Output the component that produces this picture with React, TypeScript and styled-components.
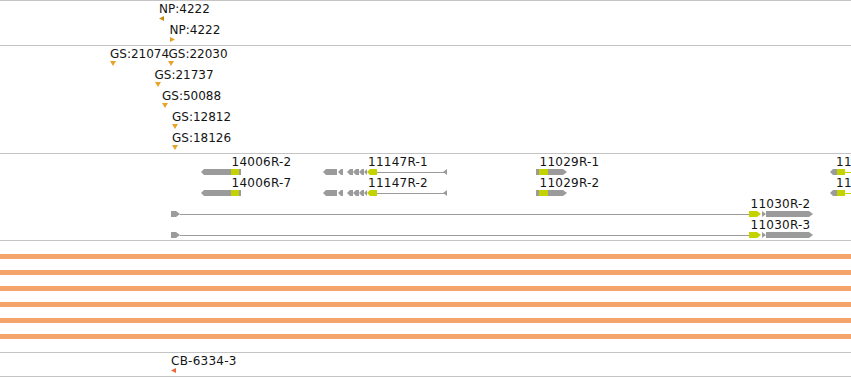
import React from "react";
import styled, { createGlobalStyle } from "styled-components";

const GlobalStyle = createGlobalStyle`
  html, body { margin: 0; padding: 0; background: #ffffff; }
  body { overflow: hidden; font-family: "DejaVu Sans", Verdana, sans-serif; }
`;

const GRAY = "#9b9b9b";
const LIME = "#c4d200";
const LINE = "#c4c4c4";
const GOLD = "#e8a328";

const Browser = styled.div`
  width: 851px;
  height: 377px;
  overflow: hidden;
  display: flex;
  flex-direction: column;
  border-top: 1px solid ${LINE};
  box-sizing: border-box;
  background: #fff;
`;

const Track = styled.section<{ $h: number }>`
  flex: none;
  height: ${(p) => p.$h}px;
  box-sizing: border-box;
  border-bottom: 1px solid ${LINE};
  padding-top: 1px;
  display: flex;
  flex-direction: column;
`;

const BarTrack = styled(Track)`
  padding: 13px 0 0;
  gap: 11px;
`;

const CoverageBar = styled.div`
  height: 5px;
  width: 100%;
  background: #f4a46a;
`;

/* one row of a feature track: a horizontal genomic canvas */
const Row = styled.div`
  position: relative;
  height: 21px;
  flex: none;
`;

/* a feature sits on the canvas at its genomic x */
const Feature = styled.div<{ $x: number }>`
  position: absolute;
  top: 0;
  left: ${(p) => p.$x}px;
  display: flex;
  flex-direction: column;
  align-items: flex-start;
`;

const Label = styled.span<{ $dx: number; $spaced?: boolean }>`
  display: block;
  margin-left: ${(p) => p.$dx}px;
  font-size: 12px;
  line-height: 14px;
  height: 14px;
  letter-spacing: ${(p) => (p.$spaced ? "0.25px" : "0")};
  color: #141414;
  white-space: nowrap;
`;

const Glyph = styled.svg<{ $dx: number }>`
  display: block;
  flex: none;
  margin-left: ${(p) => p.$dx}px;
  overflow: visible;
`;

type Dir = "left" | "right" | "down";

const triShapes: Record<Dir, { w: number; h: number; pts: string }> = {
  left: { w: 5, h: 5, pts: "0,2.5 5,0 5,5" },
  right: { w: 5, h: 5, pts: "0,0 5,2.5 0,5" },
  down: { w: 6, h: 5, pts: "0,0 6,0 3,5" },
};

type TagProps = { label: string; x: number; tx: number; dir: Dir; color: string; spaced?: boolean };

const Tag: React.FC<TagProps> = ({ label, x, tx, dir, color, spaced }) => {
  const left = Math.min(x, tx);
  const t = triShapes[dir];
  return (
    <Feature $x={left}>
      <Label $dx={x - left} $spaced={spaced}>
        {label}
      </Label>
      <Glyph $dx={tx - left} width={t.w} height={t.h} viewBox={`0 0 ${t.w} ${t.h}`}>
        <polygon points={t.pts} fill={color} />
      </Glyph>
    </Feature>
  );
};

type Shape = { pts?: string; rect?: [number, number, number, number]; c: string };

const leftArrow = (a: number, b: number, c = GRAY): Shape => ({
  pts: `${a},3 ${a + 3},0 ${b},0 ${b},6 ${a + 3},6`,
  c,
});
const rightArrow = (a: number, b: number, c = GRAY): Shape => ({
  pts: `${a},0 ${b - 4},0 ${b},3 ${b - 4},6 ${a},6`,
  c,
});
const box = (a: number, b: number, c = GRAY): Shape => ({ rect: [a, 0, b - a, 6], c });
const line = (a: number, b: number, c = GRAY): Shape => ({ rect: [a, 3, b - a, 1], c });
const leftTip = (a: number, b: number, c = GRAY): Shape => ({ pts: `${a},3 ${b},0 ${b},6`, c });

const Gene: React.FC<{ label?: string; x: number; shapes: Shape[] }> = ({ label, x, shapes }) => {
  const xs: number[] = [];
  shapes.forEach((s) => {
    if (s.rect) xs.push(s.rect[0], s.rect[0] + s.rect[2]);
    if (s.pts) s.pts.split(" ").forEach((p) => xs.push(parseFloat(p.split(",")[0])));
  });
  const min = Math.min(...xs);
  const max = Math.max(...xs);
  return (
    <Feature $x={min}>
      <Label $dx={x - min} $spaced>
        {label}
      </Label>
      <Glyph $dx={0} width={max - min} height={6} viewBox={`${min} 0 ${max - min} 6`}>
        {shapes.map((s, i) =>
          s.rect ? (
            <rect key={i} x={s.rect[0]} y={s.rect[1]} width={s.rect[2]} height={s.rect[3]} fill={s.c} />
          ) : (
            <polygon key={i} points={s.pts} fill={s.c} />
          )
        )}
      </Glyph>
    </Feature>
  );
};

const G14006: Shape[] = [leftArrow(201, 231), box(231, 239, LIME), box(239, 241)];
const G11147: Shape[] = [
  line(377, 447),
  leftTip(443, 447),
  leftArrow(323, 337),
  leftArrow(338, 343),
  leftArrow(347, 353),
  leftArrow(353, 359),
  leftArrow(359, 364),
  leftArrow(364, 367),
  leftArrow(367, 377, LIME),
];
const G11029: Shape[] = [box(536, 539), box(539, 548, LIME), rightArrow(548, 567)];
const GEdge: Shape[] = [leftArrow(830, 837), box(837, 845, LIME), line(845, 851, LIME)];
const G11030: Shape[] = [
  rightArrow(171, 180),
  line(180, 749),
  rightArrow(749, 761, LIME),
  rightArrow(762, 766),
  rightArrow(766, 813),
];

const geneRows: { label: string; x: number; shapes: Shape[] }[][] = [
  [
    { label: "14006R-2", x: 231.5, shapes: G14006 },
    { label: "11147R-1", x: 368, shapes: G11147 },
    { label: "11029R-1", x: 539.5, shapes: G11029 },
    { label: "11", x: 836, shapes: GEdge },
  ],
  [
    { label: "14006R-7", x: 231.5, shapes: G14006 },
    { label: "11147R-2", x: 368, shapes: G11147 },
    { label: "11029R-2", x: 539.5, shapes: G11029 },
    { label: "11", x: 836, shapes: GEdge },
  ],
  [{ label: "11030R-2", x: 750.5, shapes: G11030 }],
  [{ label: "11030R-3", x: 750.5, shapes: G11030 }],
];

const gsRows: { label: string; x: number; tx: number }[][] = [
  [
    { label: "GS:21074", x: 110, tx: 110 },
    { label: "GS:22030", x: 168.5, tx: 168 },
  ],
  [{ label: "GS:21737", x: 154.5, tx: 155 }],
  [{ label: "GS:50088", x: 162, tx: 162 }],
  [{ label: "GS:12812", x: 172, tx: 172 }],
  [{ label: "GS:18126", x: 172, tx: 172 }],
];

export default function App() {
  return (
    <>
      <GlobalStyle />
      <Browser>
        <Track $h={45}>
          <Row>
            <Tag label="NP:4222" x={159} tx={159} dir="left" color="#c78a0c" />
          </Row>
          <Row>
            <Tag label="NP:4222" x={169.5} tx={170} dir="right" color="#e2a020" />
          </Row>
        </Track>

        <Track $h={108}>
          {gsRows.map((row, i) => (
            <Row key={i}>
              {row.map((f) => (
                <Tag key={f.label} label={f.label} x={f.x} tx={f.tx} dir="down" color={GOLD} />
              ))}
            </Row>
          ))}
        </Track>

        <Track $h={87}>
          {geneRows.map((row, i) => (
            <Row key={i}>
              {row.map((g) => (
                <Gene key={g.label + g.x} label={g.label} x={g.x} shapes={g.shapes} />
              ))}
            </Row>
          ))}
        </Track>

        <BarTrack $h={112}>
          {Array.from({ length: 6 }).map((_, i) => (
            <CoverageBar key={i} />
          ))}
        </BarTrack>

        <Track $h={24}>
          <Row>
            <Tag label="CB-6334-3" x={171} tx={171} dir="left" color="#f0663a" spaced />
          </Row>
        </Track>
      </Browser>
    </>
  );
}
